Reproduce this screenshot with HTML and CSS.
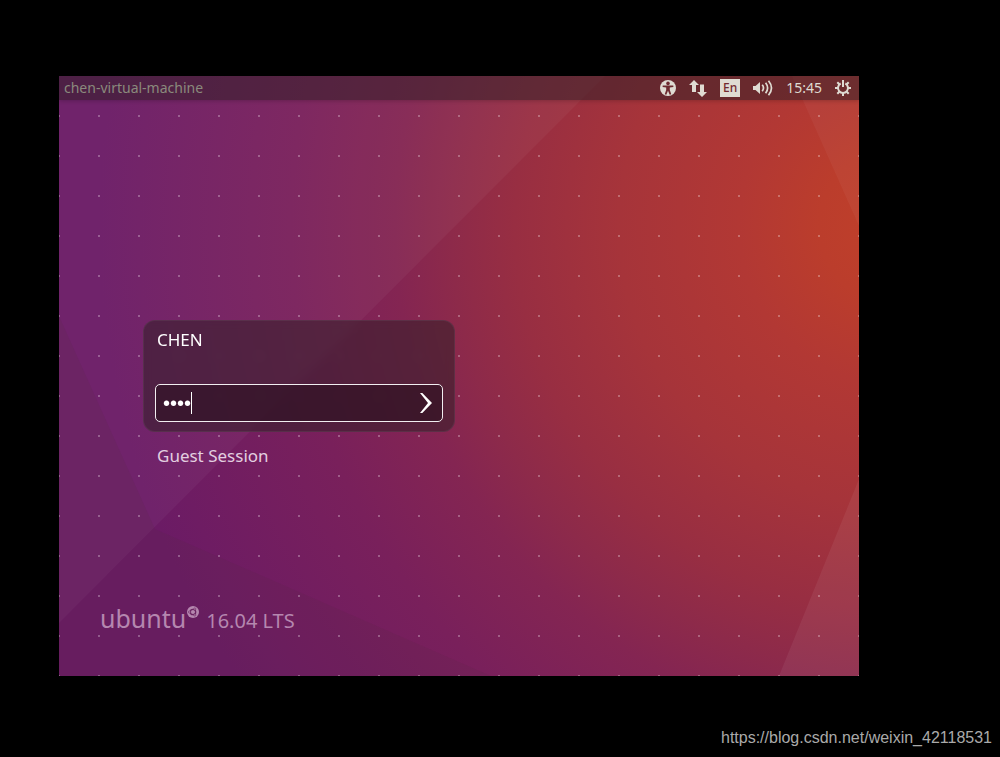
FILE: index.html
```html
<!DOCTYPE html>
<html lang="en">
<head>
<meta charset="utf-8">
<title>Login</title>
<link rel="stylesheet" href="styles.css">
</head>
<body>
<div class="screen">
  <svg class="wallpaper" viewBox="0 0 800 600" preserveAspectRatio="none" aria-hidden="true">
    <defs>
      <radialGradient id="glow" gradientUnits="userSpaceOnUse" cx="840" cy="150" r="800">
        <stop offset="0" stop-color="#c0402a"/>
        <stop offset=".1" stop-color="#bb3d2c"/>
        <stop offset=".2" stop-color="#b23834"/>
        <stop offset=".35" stop-color="#a6343a"/>
        <stop offset=".48" stop-color="#982e42"/>
        <stop offset=".56" stop-color="#8d2a4a"/>
        <stop offset=".63" stop-color="#842552"/>
        <stop offset=".76" stop-color="#79205b"/>
        <stop offset="1" stop-color="#6b1b65"/>
      </radialGradient>
    </defs>
    <path fill="url(#glow)" d="M0 0h800v600H0z"/>
    <path fill="#fff" fill-opacity=".04" d="M0 0h546L0 547z"/>
    <path fill="#56283e" fill-opacity=".14" d="M0 240 96 453 432 600H0z"/>
    <path fill="#fff" fill-opacity=".04" d="M733 0h67v150z"/>
    <path fill="#fff" fill-opacity=".06" d="M800 403v197h-80z"/>
  </svg>

  <header class="topbar">
    <span class="hostname">chen-virtual-machine</span>
    <nav class="indicators" aria-label="Indicators">
      <button class="indicator" type="button" aria-label="Accessibility">
        <svg width="16" height="16" viewBox="0 0 16 16"><circle cx="8" cy="8" r="8" fill="#dfdbd2"/><circle cx="8" cy="3.400" r="1.800" fill="#6d2a2f"/><path fill="#6d2a2f" d="M2.700 5.400 6.500 5.600h3l3.800-.2.100 1.500-3.600.6v2.600l1.500 4.200-1.600.5L8 10.800l-1.700 4-1.600-.5 1.500-4.200V7.500l-3.600-.6z"/></svg>
      </button>
      <button class="indicator" type="button" aria-label="Network">
        <svg width="18" height="17" viewBox="0 0 18 17"><path fill="#dfdbd2" d="M5 0 10 5H7v7H3V5H0zM11 4.500h4V12h3l-5 5-5-5h3z"/></svg>
      </button>
      <button class="indicator keyboard" type="button">En</button>
      <button class="indicator" type="button" aria-label="Sound">
        <svg width="20" height="16" viewBox="0 0 20 16"><path fill="#dfdbd2" d="M0 6h2.500L7 2v12l-4.500-4H0z"/><path fill="none" stroke="#dfdbd2" stroke-width="1.700" d="M9.200 4.800q2.600 3.200 0 6.400M12.600 2.800q4 5.200 0 10.400M15.500.7q6 7.300 0 14.600"/></svg>
      </button>
      <button class="indicator" type="button">15:45</button>
      <button class="indicator" type="button" aria-label="Session">
        <svg width="16" height="16" viewBox="0 0 16 16"><g fill="none" stroke="#dfdbd2" stroke-width="2"><path d="M5.700 3.500a5 5 0 1 0 4.600 0"/><path d="M8 0v7M0 8h3M13 8h3M8 13v3M2.300 2.300l2 2M13.700 2.300l-2 2M2.300 13.700l2-2M13.700 13.700l-2-2"/></g></svg>
      </button>
    </nav>
  </header>

  <main class="greeter">
    <form class="login">
      <label class="user" for="password">CHEN</label>
      <div class="field">
        <input class="password" id="password" type="password" value="1234">
        <span class="caret"></span>
        <button class="submit" type="submit" aria-label="Log in">
          <svg width="14" height="22" viewBox="0 0 14 22"><path fill="#fff" d="M1 1h2.300L13 11 3.300 21H1l8-10z"/></svg>
        </button>
      </div>
    </form>
    <a class="guest" href="#guest">Guest Session</a>
    <div class="brand">
      <span class="wordmark">ubuntu</span>
      <svg class="roundel" width="12" height="12" viewBox="0 0 12 12" aria-hidden="true"><circle cx="6" cy="6" r="6" fill="#b587af"/><circle cx="6" cy="6" r="2.700" fill="none" stroke="#6b2562" stroke-width="1.300"/><g fill="#b587af" stroke="#6b2562" stroke-width=".6"><circle cx="2.500" cy="6" r="1.100"/><circle cx="7.800" cy="3" r="1.100"/><circle cx="7.800" cy="9" r="1.100"/></g></svg>
      <span class="release">16.04 LTS</span>
    </div>
  </main>
</div>
<footer class="source">https://blog.csdn.net/weixin_42118531</footer>
</body>
</html>
```

FILE: styles.css
```css
* { box-sizing: border-box; }

body {
  margin: 0;
  min-height: 100vh;
  display: flex;
  flex-direction: column;
  background: #000;
  font-family: "Noto Sans", "Open Sans", sans-serif;
}

button {
  margin: 0;
  padding: 0;
  border: 0;
  background: none;
  color: inherit;
  font: inherit;
}

.screen {
  position: relative;
  display: flex;
  flex-direction: column;
  margin: 76px 141px 0 59px;
  aspect-ratio: 4 / 3;
  overflow: hidden;
}

.wallpaper {
  position: absolute;
  inset: 0;
  width: 100%;
  height: 100%;
}

.topbar {
  position: relative;
  display: flex;
  align-items: center;
  justify-content: space-between;
  height: 24px;
  padding: 0 8px 0 5px;
  background: rgba(49, 31, 38, 0.55);
  box-shadow: 0 1px 4px rgba(0, 0, 0, 0.2);
  color: #dfdbd2;
  font-size: 14px;
  line-height: 18px;
}

.hostname { color: #8a8a7c; }

.indicators {
  display: flex;
  align-items: center;
  gap: 13px;
}

.indicator {
  display: flex;
  align-items: center;
}

.keyboard {
  justify-content: center;
  width: 20px;
  height: 18px;
  background: #dfdbd2;
  color: #74292f;
  font-size: 12px;
  font-weight: 500;
}

.greeter {
  position: relative;
  flex: 1;
  display: flex;
  flex-direction: column;
  align-items: flex-start;
  padding: 220px 40px 39px 84px;
  background: conic-gradient(from 270deg at 2px 2px, rgba(255, 255, 255, 0.28) 90deg, transparent 0) -1px 15px / 40px 40px;
}

.login {
  width: 312px;
  height: 112px;
  display: flex;
  flex-direction: column;
  justify-content: space-between;
  padding: 8px 11px 9px;
  border: 1px solid rgba(100, 70, 90, 0.4);
  border-radius: 12px;
  background: rgba(49, 31, 38, 0.55);
  backdrop-filter: blur(4px);
}

.user {
  padding-left: 2px;
  color: #fff;
  font-size: 17px;
  line-height: 22px;
}

.field {
  position: relative;
  display: flex;
  align-items: center;
  height: 38px;
  padding: 0 9px 0 7px;
  border: 1px solid #f2eef1;
  border-radius: 5px;
  background: rgba(38, 13, 27, 0.5);
}

.password {
  flex: 1;
  min-width: 0;
  padding: 0;
  border: 0;
  outline: 0;
  background: none;
  color: #fff;
  font: 20px "Liberation Sans", sans-serif;
}

.caret {
  position: absolute;
  left: 35px;
  top: 7px;
  width: 1px;
  height: 22px;
  background: #fff;
}

.submit { display: flex; }

.guest {
  margin: 13px 0 0 14px;
  color: #e3cfe0;
  font-size: 17px;
  line-height: 22px;
  text-decoration: none;
}

.brand {
  display: flex;
  align-items: baseline;
  margin: auto 0 0 -43px;
  color: #b587af;
  line-height: 32px;
}

.wordmark {
  font-size: 25px;
}

.roundel {
  align-self: flex-start;
  margin: 4px 7px 0 1px;
}

.release { font-size: 20px; }

.source {
  margin-top: auto;
  padding: 0 8px 8px;
  color: #aaa;
  font: 16px/22px "Liberation Sans", sans-serif;
  text-align: right;
}
```
